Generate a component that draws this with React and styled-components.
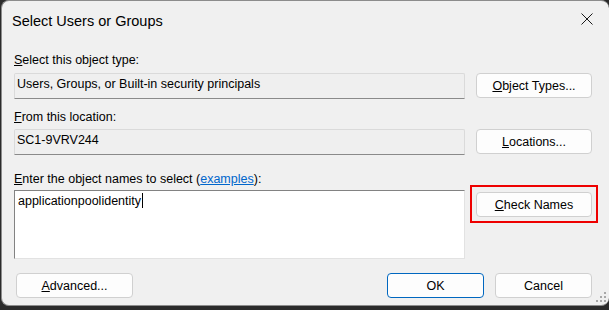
import React from 'react';
import styled, { createGlobalStyle } from 'styled-components';

const GlobalStyle = createGlobalStyle`
  html, body {
    margin: 0;
    padding: 0;
    width: 609px;
    height: 310px;
    overflow: hidden;
    background: #2b2b2b;
    font-family: "Liberation Sans", Arial, sans-serif;
  }
`;

const Window = styled.div`
  position: relative;
  box-sizing: border-box;
  margin-left: 1px;
  width: 608px;
  height: 306px;
  background: #f0f0f0;
  border: 1px solid #8c8c8c;
  border-right: none;
  border-radius: 8px;
  display: flex;
  flex-direction: column;
`;

const TitleBar = styled.div`
  height: 39px;
  display: flex;
  align-items: center;
  justify-content: space-between;
  padding: 0 16px 0 10px;
`;

const Title = styled.span`
  font-size: 14.5px;
  line-height: 18px;
  color: #000;
`;

const CloseIcon = styled.svg`
  margin-top: -3px;
  display: block;
`;

const Body = styled.div`
  padding: 12px 17px 0 12px;
  display: flex;
  flex-direction: column;
`;

const Label = styled.div`
  font-size: 12.5px;
  line-height: 16px;
  color: #000;
  margin-top: ${(p) => p.$top || 0}px;
  margin-bottom: ${(p) => p.$bottom || 0}px;
`;

const Link = styled.span`
  color: #0066cc;
  text-decoration: underline;
`;

const Row = styled.div`
  display: flex;
  align-items: flex-start;
  gap: 11px;
`;

const ReadField = styled.div`
  flex: 0 0 451px;
  box-sizing: border-box;
  height: 26px;
  padding: 0 2px;
  font-size: 12.5px;
  line-height: 20px;
  color: #000;
  background: #efefef;
  border: 1px solid #dadada;
  border-bottom-color: #8a8a8a;
  border-radius: 2px 2px 0 0;
`;

const NameBox = styled.div`
  flex: 0 0 451px;
  box-sizing: border-box;
  height: 69px;
  padding: 2px 3px;
  font-size: 12.5px;
  line-height: 16px;
  color: #000;
  background: #fff;
  border: 1px solid #e2e2e2;
  border-top-color: #828282;
  border-left-color: #828282;
`;

const Caret = styled.span`
  display: inline-block;
  width: 1px;
  height: 15px;
  margin-left: 1px;
  vertical-align: -3px;
  background: #000;
`;

const Button = styled.button`
  box-sizing: border-box;
  flex: 0 0 ${(p) => p.$width || 116}px;
  width: ${(p) => p.$width || 116}px;
  height: 25px;
  margin-top: ${(p) => p.$top || 0}px;
  padding: 0;
  display: flex;
  align-items: center;
  justify-content: center;
  font-family: inherit;
  font-size: 12.5px;
  color: #000;
  background: #fdfdfd;
  border: 1px solid ${(p) => (p.$primary ? '#0067c0' : '#d0d0d0')};
  border-radius: 4px;
`;

const Highlight = styled.div`
  margin: -5px -6px 0 -6px;
  padding: 5px 4px 4px 4px;
  border: 2px solid #ee0000;
`;

const Footer = styled.div`
  margin-top: 14px;
  padding-left: 2px;
  display: flex;
  gap: 11px;
`;

const Spacer = styled.div`
  flex: 1;
`;

const Grip = styled.svg`
  position: absolute;
  right: 3px;
  bottom: 3px;
`;

export default function App() {
  return (
    <>
      <GlobalStyle />
      <Window>
        <TitleBar>
          <Title>Select Users or Groups</Title>
          <CloseIcon width="12" height="12" viewBox="0 0 12 12">
            <path d="M0.5 0.5 L11.5 11.5 M11.5 0.5 L0.5 11.5" stroke="#1a1a1a" strokeWidth="1" fill="none" />
          </CloseIcon>
        </TitleBar>
        <Body>
          <Label $bottom={5}>
            <u>S</u>elect this object type:
          </Label>
          <Row>
            <ReadField>Users, Groups, or Built-in security principals</ReadField>
            <Button>
              <span><u>O</u>bject Types...</span>
            </Button>
          </Row>
          <Label $top={10} $bottom={4}>
            <u>F</u>rom this location:
          </Label>
          <Row>
            <ReadField>SC1-9VRV244</ReadField>
            <Button>
              <span><u>L</u>ocations...</span>
            </Button>
          </Row>
          <Label $top={16} $bottom={3}>
            <u>E</u>nter the object names to select (<Link>examples</Link>):
          </Label>
          <Row>
            <NameBox>
              applicationpoolidentity<Caret />
            </NameBox>
            <Highlight>
              <Button>
                <span><u>C</u>heck Names</span>
              </Button>
            </Highlight>
          </Row>
          <Footer>
            <Button $width={117}>
              <span><u>A</u>dvanced...</span>
            </Button>
            <Spacer />
            <Button $width={97} $primary>OK</Button>
            <Button $width={97}>Cancel</Button>
          </Footer>
        </Body>
        <Grip width="10" height="10" viewBox="0 0 10 10">
          <rect x="8" y="0" width="2" height="2" fill="#a8a8a8" />
          <rect x="4" y="4" width="2" height="2" fill="#a8a8a8" />
          <rect x="8" y="4" width="2" height="2" fill="#a8a8a8" />
          <rect x="0" y="8" width="2" height="2" fill="#a8a8a8" />
          <rect x="4" y="8" width="2" height="2" fill="#a8a8a8" />
          <rect x="8" y="8" width="2" height="2" fill="#a8a8a8" />
        </Grip>
      </Window>
    </>
  );
}
